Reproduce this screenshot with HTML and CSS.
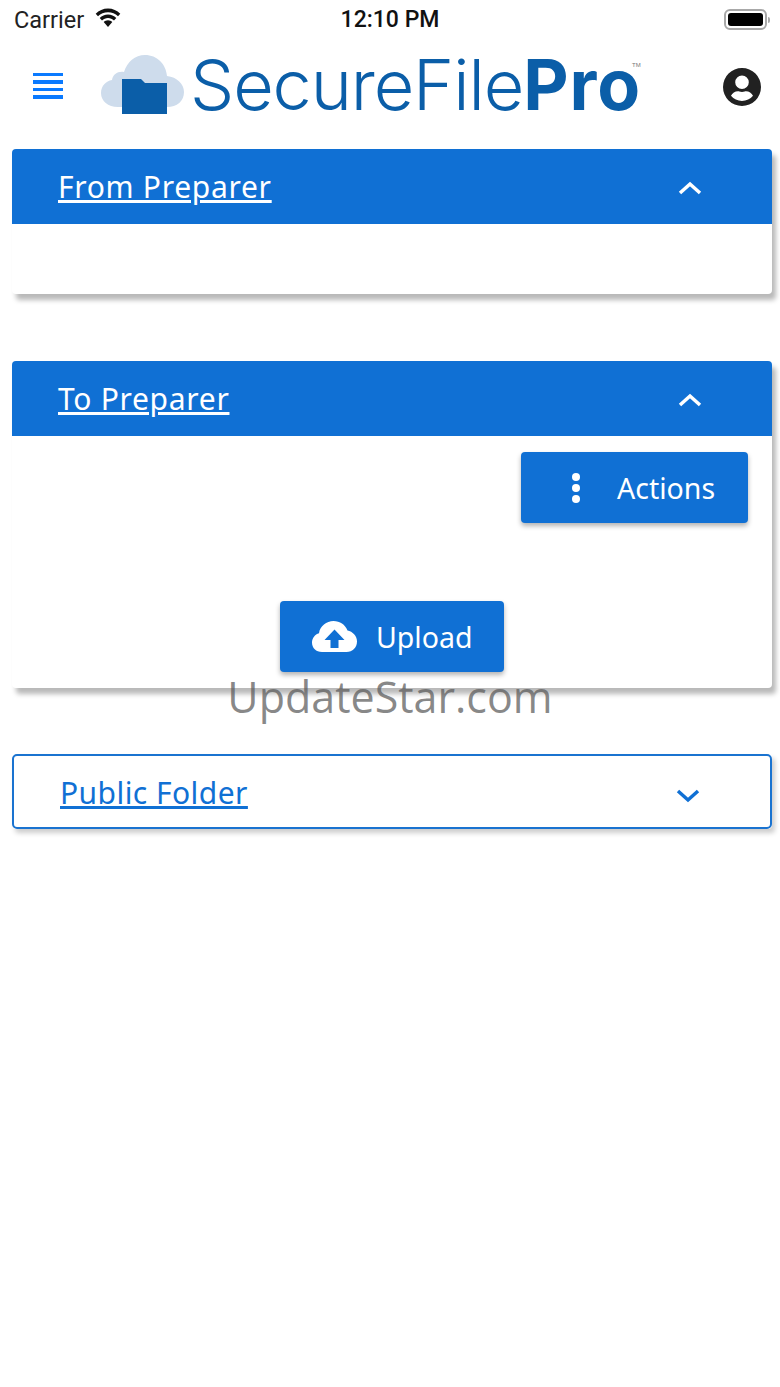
FILE: index.html
```html
<!DOCTYPE html>
<html lang="en">
  <head>
    <meta charset="UTF-8" />
    <meta name="viewport" content="width=device-width, initial-scale=1.0" />
    <title>SecureFilePro</title>
    <link rel="stylesheet" href="styles.css">
  </head>
  <body>
    <div class="status-bar">
      <div class="status-left">
        <span class="carrier">Carrier</span>
        <svg class="wifi" viewBox="0 0 28 21" width="28" height="21">
          <path d="M14 4.200c3.900 0 7.400 1.500 10 4l2.300-2.500C23.100 2.500 18.800.5 14 .5S4.900 2.500 1.700 5.700L4 8.200c2.600-2.500 6.100-4 10-4z" />
          <path d="M14 10c2.300 0 4.400.9 6 2.400l2.300-2.500C20.100 7.800 17.200 6.500 14 6.500s-6.100 1.300-8.300 3.400L8 12.400c1.600-1.500 3.700-2.400 6-2.400z" />
          <path d="M14 12.300c-1.700 0-3.200.7-4.300 1.800L14 19l4.300-4.900c-1.100-1.100-2.600-1.800-4.300-1.800z" />
        </svg>
      </div>
      <span class="clock">12:10 PM</span>
      <div class="battery">
        <div class="battery-body"><div class="battery-fill"></div></div>
        <div class="battery-cap"></div>
      </div>
    </div>

    <header class="app-bar">
      <div class="menu-icon">
        <span></span><span></span><span></span><span></span>
      </div>
      <div class="logo">
        <svg class="logo-mark" viewBox="0 0 83 60" width="83" height="60">
          <path fill="#cedcec" d="M17 52C7 52 0 46 0 38c0-7 5-12 11-13 1-6 6-9 12-8 3-10 11-17 21-17 12 0 21 9 22 21 10 1 17 8 17 16 0 9-7 15-17 15z" />
          <path fill="#0b5ea8" d="M21 24h19l4 4h22v31H21z" />
        </svg>
        <span class="logo-text">SecureFile<b>Pro</b></span>
        <span class="logo-tm">TM</span>
      </div>
      <svg class="user-icon" viewBox="0 0 38 38" width="38" height="38">
        <path fill-rule="evenodd" d="M19 0a19 19 0 1 0 0 38a19 19 0 0 0 0-38zM19 7.500a6.800 6.800 0 1 1 0 13.600a6.800 6.800 0 0 1 0-13.600zM19 33c-4.400 0-8.300-2-11-5.200c1.300-2.700 4-4.500 7-4.500c.6 0 1 .1 1.300.2c1 .3 1.800.5 2.700.5s1.800-.2 2.700-.5c.3-.1.700-.2 1.300-.2c3 0 5.700 1.800 7 4.500C27.300 31 23.400 33 19 33z" />
      </svg>
    </header>

    <main class="panels">
      <section class="panel">
        <div class="panel-header">
          <a href="#" class="panel-title">From Preparer</a>
          <svg class="chevron" viewBox="0 0 24 14" width="24" height="14"><path d="M2 12l10-9 10 9" /></svg>
        </div>
        <div class="panel-body empty"></div>
      </section>

      <section class="panel">
        <div class="panel-header">
          <a href="#" class="panel-title">To Preparer</a>
          <svg class="chevron" viewBox="0 0 24 14" width="24" height="14"><path d="M2 12l10-9 10 9" /></svg>
        </div>
        <div class="panel-body">
          <div class="actions-row">
            <button class="btn btn-actions">
              <span class="dots"><i></i><i></i><i></i></span>
              Actions
            </button>
          </div>
          <div class="upload-row">
            <button class="btn btn-upload">
              <svg viewBox="0 0 45 31" width="45" height="31">
                <path fill="#fff" d="M10 31C4 31 0 27 0 21.500c0-4.500 3-8 7-9.300C8 5 14.500 0 21.500 0c6.500 0 11.500 3.500 14 9.500c5 1 9.500 5.500 9.500 11C45 26.500 40.500 31 34.500 31z" />
                <path fill="#1070d4" d="M22.500 8.500l10 10.500h-6v8h-8v-8h-6z" />
              </svg>
              Upload
            </button>
          </div>
        </div>
      </section>

      <section class="panel panel-closed">
        <div class="panel-header">
          <a href="#" class="panel-title">Public Folder</a>
          <svg class="chevron" viewBox="0 0 24 14" width="24" height="14"><path d="M2 2l10 9 10-9" /></svg>
        </div>
      </section>
    </main>

    <div class="watermark">UpdateStar.com</div>
  </body>
</html>
```

FILE: styles.css
```css
body {
  font-family: "Noto Sans", "Open Sans", sans-serif;
  margin: 0;
  background-color: white;
  color: #111;
  height: 1387px;
  overflow: hidden;
  position: relative;
}
.status-bar {
  height: 44px;
  padding: 0 10px 5px 14px;
  box-sizing: border-box;
  display: flex;
  justify-content: space-between;
  align-items: center;
  position: relative;
  font-family: Roboto, sans-serif;
}
.status-left {
  display: flex;
  align-items: center;
  gap: 10px;
}
.carrier {
  font-size: 23.500px;
  color: #222;
}
.wifi {
  margin-bottom: 2px;
  fill: #111;
}
.clock {
  position: absolute;
  left: 0;
  right: 0;
  text-align: center;
  font-size: 23px;
  font-weight: 500;
}
.battery {
  display: flex;
  align-items: center;
  gap: 1px;
}
.battery-body {
  width: 43px;
  height: 21px;
  box-sizing: border-box;
  border: 2px solid #a8a8a8;
  border-radius: 6px;
  padding: 2px;
}
.battery-fill {
  height: 100%;
  background-color: black;
  border-radius: 3px;
}
.battery-cap {
  width: 2px;
  height: 6px;
  background-color: #aaa;
  border-radius: 0 2px 2px 0;
}
.app-bar {
  height: 105px;
  display: flex;
  align-items: center;
  padding: 0 19px 0 33px;
  box-sizing: border-box;
}
.menu-icon {
  width: 30px;
  display: flex;
  flex-direction: column;
  gap: 4px;
  margin-bottom: 22px;
}
.menu-icon span {
  height: 3.500px;
  background-color: #0a7aff;
}
.logo {
  margin-left: 38px;
  display: flex;
  align-items: center;
  flex: 1;
  margin-bottom: 24px;
  position: relative;
}
.logo-text {
  margin-left: 6px;
  font-family: Inter, "Liberation Sans", sans-serif;
  font-weight: 300;
  font-size: 70px;
  line-height: 60px;
  letter-spacing: -1.100px;
  color: #0b5ea8;
  white-space: nowrap;
}
.logo-text b {
  font-weight: bold;
  letter-spacing: 1px;
}
.logo-tm {
  position: absolute;
  left: 531px;
  top: 7px;
  font-family: "Liberation Sans", sans-serif;
  font-size: 6px;
  color: #777;
}
.user-icon {
  fill: #212121;
  margin-bottom: 19px;
}
.panels {
  padding: 0 8px 0 12px;
  display: flex;
  flex-direction: column;
  gap: 67px;
}
.panel {
  background-color: white;
  border-radius: 4px;
  box-shadow: 4px 6px 5px rgba(0, 0, 0, 0.28);
}
.panel-header {
  height: 75px;
  box-sizing: border-box;
  padding: 0 70px 0 46px;
  background-color: #1070d4;
  border-radius: 4px 4px 0 0;
  display: flex;
  justify-content: space-between;
  align-items: center;
}
.panel-title {
  color: white;
  font-size: 30px;
  letter-spacing: 0.700px;
}
.chevron {
  fill: none;
  stroke: white;
  stroke-width: 3.500;
  margin-top: 2px;
}
.panel-body {
  padding: 16px 24px 16px 0;
}
.panel-body.empty {
  height: 70px;
  box-sizing: border-box;
}
.actions-row {
  display: flex;
  justify-content: flex-end;
}
.upload-row {
  margin-top: 78px;
  padding-left: 24px;
  display: flex;
  justify-content: center;
}
.btn {
  height: 71px;
  background-color: #1070d4;
  color: white;
  border: none;
  border-radius: 4px;
  font-family: inherit;
  font-size: 28.500px;
  display: flex;
  align-items: center;
  box-shadow: 0 3px 5px rgba(0, 0, 0, 0.3);
}
.btn-actions {
  width: 227px;
  padding-left: 51px;
  gap: 37px;
}
.btn-upload {
  width: 224px;
  padding-left: 32px;
  gap: 19px;
}
.dots {
  display: flex;
  flex-direction: column;
  gap: 3px;
}
.dots i {
  width: 8px;
  height: 8px;
  background-color: white;
  border-radius: 50%;
}
.panel-closed {
  margin-top: -1px;
  box-shadow: 3px 4px 5px rgba(0, 0, 0, 0.2);
}
.panel-closed .panel-header {
  background-color: white;
  border: 2px solid #1a73d0;
  border-radius: 5px;
  padding: 0 72px 0 46px;
}
.panel-closed .panel-title {
  color: #1070d4;
  letter-spacing: 0.450px;
  margin-top: 1px;
}
.panel-closed .chevron {
  stroke: #1070d4;
  margin: 8px -2px 0 0;
}
.watermark {
  position: absolute;
  left: 0;
  right: 0;
  top: 667px;
  text-align: center;
  font-family: "Open Sans", sans-serif;
  font-size: 43px;
  color: rgba(90, 90, 90, 0.72);
}
```
